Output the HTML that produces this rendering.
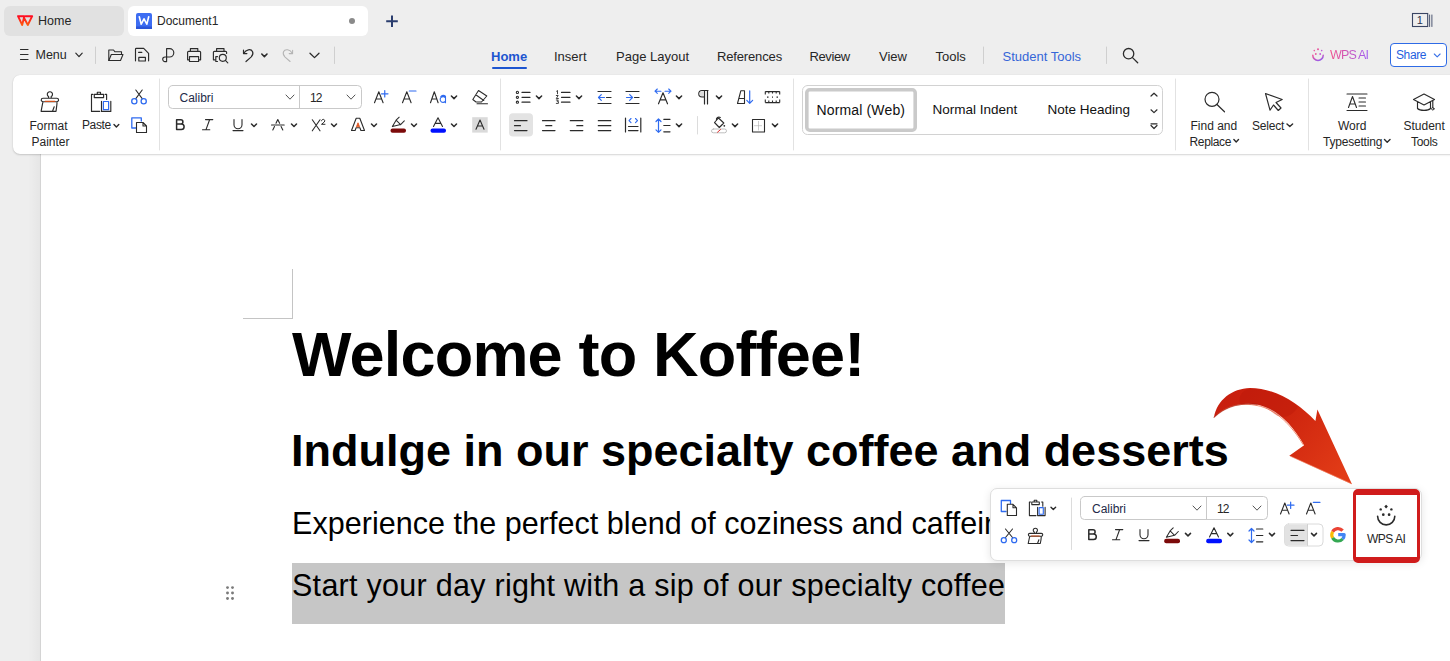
<!DOCTYPE html>
<html><head><meta charset="utf-8">
<style>
*{margin:0;padding:0;box-sizing:border-box}
html,body{width:1450px;height:661px;overflow:hidden;background:#eeeeee;font-family:"Liberation Sans",sans-serif;color:#262626}
.a{position:absolute}
.l{position:absolute;white-space:nowrap;line-height:1;font-size:12px;color:#262626}
.tb{position:absolute;white-space:nowrap;line-height:1;font-size:13px;color:#262626}
svg.ov{position:absolute;left:0;top:0;width:1450px;height:661px;overflow:visible}
#page{position:absolute;left:40px;top:150px;width:1410px;height:511px;background:#fff;border-left:1px solid #d4d4d4}
#shade{position:absolute;left:28px;top:150px;width:12px;height:511px;background:linear-gradient(90deg,rgba(0,0,0,0),rgba(0,0,0,.035))}
#ribbon{position:absolute;left:13px;top:75px;width:1460px;height:79px;background:#fff;border-radius:7px;box-shadow:0 1px 2px rgba(0,0,0,.16),0 0 1px rgba(0,0,0,.12)}
.h1{position:absolute;font-weight:bold;color:#000;white-space:nowrap;line-height:1}
.body{position:absolute;left:292px;color:#000;white-space:nowrap;line-height:1;font-size:30.5px;letter-spacing:0.28px}
.sty{position:absolute;white-space:nowrap;line-height:1;font-size:14px;color:#111}
#ftb{position:absolute;left:990px;top:488px;width:432px;height:73px;background:#fff;border:1px solid #dedede;border-radius:7px;box-shadow:0 2px 8px rgba(0,0,0,.10)}
</style></head><body>
<!-- ===== tab bar ===== -->
<div class="a" style="left:4px;top:6px;width:120px;height:30px;background:#e1e1e1;border-radius:6px"></div>
<div class="a" style="left:128px;top:6px;width:240px;height:30px;background:#fff;border-radius:6px"></div>
<div class="l" style="left:38px;top:15px;font-size:12.5px">Home</div>
<div class="l" style="left:157px;top:15px">Document1</div>

<!-- menu row -->
<div class="l" style="left:35.5px;top:49px;font-size:12.5px">Menu</div>

<!-- ribbon tabs -->
<div class="tb" style="left:491px;top:50px;font-weight:bold;color:#1d55d0">Home</div>
<div class="a" style="left:492px;top:66.5px;width:35px;height:2.5px;background:#1d55d0;border-radius:1px"></div>
<div class="tb" style="left:554px;top:50px">Insert</div>
<div class="tb" style="left:616px;top:50px">Page Layout</div>
<div class="tb" style="left:717px;top:50px;letter-spacing:-0.15px">References</div>
<div class="tb" style="left:809.5px;top:50px;letter-spacing:-0.4px">Review</div>
<div class="tb" style="left:879px;top:50px">View</div>
<div class="tb" style="left:935.5px;top:50px">Tools</div>
<div class="tb" style="left:1002.5px;top:50px;color:#3566d8">Student Tools</div>
<div class="l" style="left:1330px;top:49px;font-size:12.5px;letter-spacing:-0.8px;background:linear-gradient(90deg,#f2508c,#a05cf0);-webkit-background-clip:text;background-clip:text;color:transparent">WPS AI</div>
<div class="a" style="left:1390px;top:43px;width:57px;height:24px;border:1px solid #2e6be6;border-radius:4px;background:#fff"></div>
<div class="l" style="left:1396px;top:49px;color:#1f5fe0;letter-spacing:-0.4px">Share</div>

<!-- ===== page ===== -->
<div id="shade"></div>
<div id="page"></div>
<div id="ribbon"></div>

<!-- ribbon labels -->
<div class="l" style="left:29.5px;top:120px">Format</div>
<div class="l" style="left:31.5px;top:135.5px">Painter</div>
<div class="l" style="left:82px;top:119px;letter-spacing:-0.4px">Paste</div>
<div class="l" style="left:179.5px;top:92px;color:#232a48">Calibri</div>
<div class="l" style="left:310px;top:92px;letter-spacing:-1px">12</div>
<div class="sty" style="left:816.5px;top:103px;letter-spacing:0.15px">Normal (Web)</div>
<div class="sty" style="left:932.5px;top:103px;font-size:13.5px">Normal Indent</div>
<div class="sty" style="left:1047.5px;top:103px;font-size:13.5px">Note Heading</div>
<div class="l" style="left:1190.5px;top:120px">Find and</div>
<div class="l" style="left:1189.5px;top:135.5px;letter-spacing:-0.35px">Replace</div>
<div class="l" style="left:1252px;top:119.5px;letter-spacing:-0.2px">Select</div>
<div class="l" style="left:1338px;top:120px">Word</div>
<div class="l" style="left:1323px;top:135.5px;letter-spacing:-0.2px">Typesetting</div>
<div class="l" style="left:1403.5px;top:120px">Student</div>
<div class="l" style="left:1411px;top:135.5px;letter-spacing:-0.3px">Tools</div>

<!-- ===== document ===== -->
<div class="a" style="left:292px;top:269px;width:1px;height:50px;background:#c4c4c4"></div>
<div class="a" style="left:243px;top:318px;width:50px;height:1px;background:#c4c4c4"></div>
<div class="h1" style="left:292px;top:323px;font-size:63px;letter-spacing:-0.8px">Welcome to Koffee!</div>
<div class="h1" style="left:291px;top:428px;font-size:45px">Indulge in our specialty coffee and desserts</div>
<div class="a" style="left:292px;top:563px;width:713px;height:61px;background:#c6c6c6"></div>
<div class="body" style="top:508px;letter-spacing:0.05px">Experience the perfect blend of coziness and caffeine</div>
<div class="body" style="top:569.5px">Start your day right with a sip of our specialty coffee</div>

<!-- ===== floating toolbar ===== -->
<div id="ftb"></div>
<div class="l" style="left:1092px;top:503px;color:#232a48">Calibri</div>
<div class="l" style="left:1217px;top:503px;letter-spacing:-1px">12</div>
<div class="a" style="left:1353px;top:489px;width:67px;height:74px;border:solid #d01c1c;border-width:6px 3px 6px 3px;border-radius:5px;background:#fff"></div>
<div class="l" style="left:1367px;top:533px;letter-spacing:-0.5px;color:#262626">WPS AI</div>

<svg class="ov" viewBox="0 0 1450 661" fill="none" stroke="#2b2b2b" stroke-width="1.1" stroke-linecap="round" stroke-linejoin="round">
<!-- WPS logo -->
<defs><linearGradient id="wl" x1="0" y1="0" x2="0" y2="1"><stop offset="0" stop-color="#ff0a22"/><stop offset="1" stop-color="#ff5a0c"/></linearGradient></defs><path d="M18,16.2 H24.3 L22.2,25 Z M25.5,16.2 H32.2 L27.8,25 L24.5,18.8" stroke="url(#wl)" stroke-width="1.9"/>
<!-- doc icon -->
<rect x="136" y="13" width="16" height="16" rx="2" fill="#3d6df2" stroke="none"/>
<rect x="136" y="26.5" width="16" height="2.5" fill="#2c55d8" stroke="none"/>
<path d="M139.3,16.8 L141.2,24.2 L144,18.8 L146.8,24.2 L148.7,16.8" stroke="#fff" stroke-width="1.6"/>
<circle cx="352" cy="21" r="3" fill="#8a8a8a" stroke="none"/>
<path d="M392,15.5 V27 M386.2,21.2 H397.8" stroke="#2a3d6e" stroke-width="2" stroke-linecap="butt"/>
<!-- page count icon -->
<rect x="1412.5" y="13.5" width="15.2" height="13" stroke="#3a4563" stroke-width="1.1" stroke-linejoin="miter"/>
<path d="M1429.6,15 V26.5 M1431.9,15 V26.5" stroke="#3a4563" stroke-width="0.9"/>
<text x="1416.8" y="24.2" font-family="Liberation Sans" font-size="11" fill="#2a3553" stroke="none">1</text>
<!-- menu row -->
<path d="M20.5,49.5 H28 M20.5,54.5 H28 M20.5,59.5 H28" stroke-width="1.2"/>
<path d="M75.8,53.2 L79,56.6 L82.2,53.2" stroke-width="1.2"/>
<path d="M95.5,47 V63.5" stroke="#cfcfcf" stroke-width="1"/>
<path d="M108.8,60.5 V50 H113.5 L115,51.8 H121.5 V54" />
<path d="M108.8,60.5 L111.3,54.5 H123 L120.5,60.5 Z"/>
<path d="M135.5,60.8 V49.2 a0.8,0.8 0 0 1 0.8,-0.8 H143.7 L148.6,53.3 V60.8 M138.6,52.4 H141.8 M138.8,61 V57.3 H145.4 V61 Z" stroke-width="1.15"/>
<path d="M166.6,61.5 V48.6 H169.6 a4.2,4.2 0 0 1 0,8.4 H165 a2.3,2.3 0 0 0 0,4.6 H166.6" stroke-width="1.15"/>
<path d="M190.4,51.3 V48.6 H197.8 V51.3 M189.3,59.8 H187.6 V52.3 a1,1 0 0 1 1,-1 H199.6 a1,1 0 0 1 1,1 V59.8 H198.8 M189.5,56.6 H198.6 V61.5 H189.5 Z" stroke-width="1.15"/>
<path d="M216.6,51.3 V48.6 H224 V51.3 M214.8,59.8 H213.4 V52.3 a1,1 0 0 1 1,-1 H225.6 a1,1 0 0 1 1,1 V53.5 M217.5,56.6 H215.8 V61.5 H217.5" stroke-width="1.15"/>
<circle cx="222.8" cy="57.8" r="3.5" stroke-width="1.15"/><path d="M225.4,60.4 L227.8,62.8" stroke-width="1.15"/>
<path d="M243.5,50.2 V53.6 H246.9 M244,53 C245.8,49.6 251,48.3 252.6,51.8 C253.4,53.8 252.6,55.6 251,57.1 L246,61.5" stroke-width="1.2"/>
<path d="M261.8,54 L264.4,56.6 L267,54" stroke-width="1.6"/>
<path d="M292.6,50.2 V53.6 H289.2 M292.1,53 C290.3,49.6 285.1,48.3 283.5,51.8 C282.7,53.8 283.5,55.6 285.1,57.1 L290.1,61.5" stroke="#b4b4b4" stroke-width="1.05"/>
<path d="M310,53.2 L314.5,57.6 L319,53.2" stroke-width="1.3"/>
<path d="M334.5,47 V63.5" stroke="#cfcfcf" stroke-width="1"/>
<!-- tab separators/search -->
<path d="M983.5,47 V63.5 M1106.5,47 V63.5" stroke="#cfcfcf" stroke-width="1"/>
<circle cx="1128.6" cy="53.7" r="5.2" stroke-width="1.3"/><path d="M1132.5,57.6 L1137.7,62.8" stroke-width="1.3"/>
<!-- wps ai small -->
<defs><linearGradient id="g1" x1="0" y1="0" x2="1" y2="1"><stop offset="0" stop-color="#f0559a"/><stop offset="1" stop-color="#8a5cf5"/></linearGradient></defs>
<path d="M1312.8,55.2 a5.2,5.2 0 0 0 10.4,0" stroke="url(#g1)" stroke-width="1.5"/>
<circle cx="1315.8" cy="54" r="0.9" fill="#e8579f" stroke="none"/><circle cx="1320.2" cy="54" r="0.9" fill="#c35ad8" stroke="none"/>
<circle cx="1318" cy="49.2" r="1" fill="#e8579f" stroke="none"/><circle cx="1314.3" cy="50.6" r="0.8" fill="#e8579f" stroke="none"/><circle cx="1321.7" cy="50.6" r="0.8" fill="#c35ad8" stroke="none"/>
<path d="M1434.3,54 L1437.2,56.8 L1440.1,54" stroke="#3a72e8" stroke-width="1.1"/>
</svg>
<svg class="ov" viewBox="0 0 1450 661" fill="none" stroke="#2b2b2b" stroke-width="1.1" stroke-linecap="round" stroke-linejoin="round">
<!-- format painter -->
<path d="M48.6,97.9 V96.6 a2.6,2.6 0 1 1 2.6,0 V97.9 M43,98.2 H56.8 a1.75,1.75 0 0 1 0,3.5 H43 a1.75,1.75 0 0 1 0,-3.5 Z M42.9,101.8 L41.1,111.3 H56 C56.5,108 57,105 57.1,101.8 M52.6,111 L54.2,106.8" stroke-width="1.15"/>
<path d="M45.2,101.3 H54.8" stroke="#d0501c" stroke-width="1.2"/>
<!-- paste -->
<path d="M92.9,94.4 H91.5 V111.4 H99.7 M105.2,94.4 H106.6 V99.5 M94.3,94.4 H103.6 V97.6 H94.3 Z M97.3,94.4 V92.2 H100.5 V94.4 M101.5,101.2 V111.4 H110.8 V101.2" stroke-width="1.15"/>
<rect x="103.4" y="101.5" width="5.2" height="8.2" stroke="#2f6bf0" stroke-width="1.2"/>
<!-- cut -->
<path d="M135.8,98.6 L142.2,90 M142.2,98.6 L135.8,90" stroke="#2b2b2b"/>
<circle cx="134.3" cy="101.2" r="2.6" stroke="#2f6bf0" stroke-width="1.3"/><circle cx="143.7" cy="101.2" r="2.6" stroke="#2f6bf0" stroke-width="1.3"/>
<!-- copy -->
<path d="M136,128 H131.8 V117.8 H141.3 V121" stroke="#2f6bf0" stroke-width="1.3"/>
<path d="M136.5,122.5 H143 L146.5,126 V132.5 H136.5 Z M143,122.5 V126 H146.5"/>
<path d="M159.5,79 V150" stroke="#e2e2e2" stroke-width="1"/>
<!-- font combo -->
<rect x="168.5" y="85.5" width="193" height="23" rx="4" stroke="#c9c9c9" stroke-width="1"/>
<path d="M299.5,86 V108" stroke="#c9c9c9" stroke-width="1"/>
<path d="M286,95 L290,99.2 L294,95 M347,95 L351,99.2 L355,95" stroke="#555" stroke-width="1"/>
<!-- B I U -->
<path d="M176.6,119.8 V129.6 H181.3 a2.8,2.8 0 0 0 0,-5.6 H176.6 M176.6,119.8 H180.8 a2.1,2.1 0 0 1 0,4.2" stroke-width="1.5"/>
<path d="M205.5,119.6 H212.8 M202.5,129.8 H209.8 M209.6,119.8 L206,129.6" stroke-width="1.1"/>
<path d="M234,119.5 V124.8 a4,4 0 0 0 8,0 V119.5 M233,130.6 H243"/>
<path d="M251.5,124 L254,126.5 L256.5,124 M291.5,124 L294,126.5 L296.5,124 M331.5,124 L334,126.5 L336.5,124 M371.5,124 L374,126.5 L376.5,124 M411.5,124 L414,126.5 L416.5,124 M451.5,124 L454,126.5 L456.5,124" stroke-width="1.5"/>
<!-- strike A -->
<path d="M272.8,130 L274.5,126.5 M276,123.2 L277.8,119.5 L279.6,123.2 M281.1,126.5 L282.8,130 M271.5,125 H284.2" stroke-width="1.1"/>
<!-- X2 -->
<path d="M312.3,119.8 L320,130.8 M320,119.8 L312.3,130.8" stroke-width="1.1"/>
<path d="M321.5,120.8 a1.6,1.6 0 1 1 2.8,1.2 L321.5,124.3 H325" stroke-width="1"/>
<!-- text effect A -->
<path d="M351.5,130.5 L356.2,118.3 H359.8 L364.5,130.5 H360.9 L359.9,127.8 H356.1 L355.1,130.5 Z" stroke-width="1.1"/>
<path d="M356.6,126.4 L358,122.8 L359.4,126.4 Z" fill="#e0521c" stroke="#e0521c" stroke-width="0.9"/>
<!-- highlighter -->
<path d="M392.4,126.6 L396.1,120.2 L400.6,124.6 Z M396.1,120.2 L399.2,117.2 M400.6,124.6 L404.3,120.8" stroke-width="1.05"/>
<rect x="390.5" y="128.5" width="15.5" height="4.3" rx="2" fill="#7c0a0a" stroke="none"/>
<!-- font color -->
<path d="M433.5,126.5 L438,117.8 L442.5,126.5 M435.2,123.4 H440.8" stroke-width="1.1"/>
<rect x="430.5" y="128.5" width="15.5" height="4.3" rx="2" fill="#0010ff" stroke="none"/>
<!-- char shading -->
<rect x="472.2" y="117.2" width="15.5" height="15.4" fill="#dadada" stroke="none"/>
<path d="M476,129.2 L480,120 L484,129.2 M477.4,126 H482.6" stroke-width="1.1"/>
<!-- A+ A- Aa eraser -->
<path d="M374.5,102.8 L378.8,91.8 L383.1,102.8 M376.1,99 H381.5" stroke-width="1.1"/>
<path d="M381.5,93.8 H388 M384.75,90.5 V97" stroke="#2f6bf0" stroke-width="1.2"/>
<path d="M402.5,102.8 L406.8,91.8 L411.1,102.8 M404.1,99 H409.5" stroke-width="1.1"/>
<path d="M409.3,91 H416" stroke="#2f6bf0" stroke-width="1.2"/>
<path d="M430.5,102.8 L434.3,91.8 L438.1,102.8 M431.9,99 H436.7" stroke-width="1.1"/>
<path d="M445.5,96.2 V102.8 M445.2,97.5 a2.9,2.9 0 1 0 0,4 M440.8,96.5 a3,2.6 0 0 1 4.6,-0.3" stroke="#2f6bf0" stroke-width="1.1"/>
<path d="M478.5,90.5 L486.8,96 L481.5,102 L476,102 L472.8,99.5 Z M475.8,94.8 L483.8,100.5 M477,103.8 H487.5" stroke-width="1.05"/>
<path d="M500.5,79 V150" stroke="#e2e2e2" stroke-width="1"/>
</svg>
<svg class="ov" viewBox="0 0 1450 661" fill="none" stroke="#2b2b2b" stroke-width="1.1" stroke-linecap="round" stroke-linejoin="round">
<path d="M114,124.6 L116.4,127 L118.8,124.6" stroke-width="1.4"/>
<path d="M451.4,96 L454,98.6 L456.6,96" stroke-width="1.5"/>
<!-- bullets -->
<circle cx="517.4" cy="92.4" r="1.1"/><circle cx="517.4" cy="97.3" r="1.1"/><circle cx="517.4" cy="102.2" r="1.1"/>
<path d="M522,92.4 H530 M522,97.3 H530 M522,102.2 H530" stroke-width="1.2"/>
<path d="M536.4,96 L539,98.6 L541.6,96 M576.4,96 L579,98.6 L581.6,96 M676.4,96 L679,98.6 L681.6,96 M716.4,96 L719,98.6 L721.6,96" stroke-width="1.5"/>
<!-- numbering -->
<path d="M556.6,91.2 L557.5,90.5 V93.8 M556.3,95.5 H558.2 L556.3,98.5 H558.4 M556.3,100 H558.3 L557.2,101.4 H558.4 V103.4 H556.3" stroke-width="0.9"/>
<path d="M561.5,92.4 H570 M561.5,97.3 H570 M561.5,102.2 H570" stroke-width="1.2"/>
<!-- indents -->
<path d="M598,91.5 H611 M598,103.5 H611 M606.5,97.5 H611" stroke-width="1.2"/>
<path d="M598.5,97.5 H604.5 M601.3,94.7 L598.5,97.5 L601.3,100.3" stroke="#2f6bf0" stroke-width="1.2"/>
<path d="M626,91.5 H639 M626,103.5 H639 M634.5,97.5 H639" stroke-width="1.2"/>
<path d="M626.5,97.5 H632.5 M629.7,94.7 L632.5,97.5 L629.7,100.3" stroke="#2f6bf0" stroke-width="1.2"/>
<!-- char spacing -->
<path d="M658.5,103.8 L663,92.8 L667.5,103.8 M660.2,99.8 H665.8" stroke-width="1.15"/>
<path d="M655,91.2 H661 M657.3,89 L655,91.2 L657.3,93.4 M665,91.2 H671 M668.7,89 L671,91.2 L668.7,93.4" stroke="#2f6bf0" stroke-width="1.1"/>
<!-- pilcrow -->
<path d="M704.5,90.5 V104 M707.5,90.5 V104 M708,90.5 H702 a3.2,3.2 0 0 0 0,6.4 H704.5" stroke-width="1.2"/>
<path d="M702,91.3 a2.5,2.5 0 0 0 0,5 H704 V91.3 Z" fill="#dcdcdc" stroke="none"/>
<!-- sort -->
<path d="M737.5,103.5 L740.8,90.8 H744.5 V103.5 Z M739,98.5 H744.3" stroke-width="1.1"/>
<path d="M749.7,90.8 V103 M746.8,100.3 L749.7,103.3 L752.6,100.3" stroke="#2f6bf0" stroke-width="1.2"/>
<!-- grid dashed -->
<path d="M765.3,91.6 H779.7 M765.3,102.6 H779.7 M765.3,91.6 V94.6 M779.7,91.6 V94.6 M765.3,99.6 V102.6 M779.7,99.6 V102.6 M768.8,91.6 V93.6 M772.5,91.6 V93.6 M776.2,91.6 V93.6 M768.8,102.6 V100.6 M772.5,102.6 V100.6 M776.2,102.6 V100.6" stroke-width="1.1" stroke-linecap="butt"/>
<path d="M767,97.1 h1.5 M772,97.1 h1 M776.5,97.1 h1.5" stroke-width="1.1" stroke-linecap="butt"/>
<!-- align buttons -->
<rect x="509" y="113.2" width="24" height="23.4" rx="4" fill="#e3e3e3" stroke="none"/>
<path d="M514.5,120.7 H527 M514.5,125.7 H520.5 M514.5,130.6 H527" stroke-width="1.2"/>
<path d="M542.5,120.7 H555 M545.8,125.7 H551.8 M542.5,130.6 H555" stroke-width="1.2"/>
<path d="M570.3,120.7 H582.8 M576.8,125.7 H582.8 M570.3,130.6 H582.8" stroke-width="1.2"/>
<path d="M598.3,120.7 H610.8 M598.3,125.7 H610.8 M598.3,130.6 H610.8" stroke-width="1.2"/>
<path d="M625.5,118 V132 M640.8,118 V132 M628.5,126.5 H638 M628.5,130.6 H638" stroke-width="1.2"/>
<path d="M631,118.5 L629,120.6 L631,122.7 M635.5,118.5 L637.5,120.6 L635.5,122.7" stroke="#2f6bf0" stroke-width="1.1"/>
<!-- line spacing -->
<path d="M658.5,119 V132.3 M656,121.5 L658.5,119 L661,121.5 M656,129.8 L658.5,132.3 L661,129.8" stroke="#2f6bf0" stroke-width="1.2"/>
<path d="M663.8,119.3 H670 M663.8,125.5 H670 M663.8,131.8 H670" stroke-width="1.2"/>
<path d="M676.4,124 L679,126.6 L681.6,124 M732.4,124 L735,126.6 L737.6,124 M772.4,124 L775,126.6 L777.6,124" stroke-width="1.5"/>
<path d="M697.5,116.5 V134" stroke="#dcdcdc" stroke-width="1"/>
<!-- shading -->
<path d="M714.5,122.5 L718.5,118 L723.8,123 L719.3,127.5 Z M716.5,120.3 a2.5,2.5 0 0 1 3.8,-2.8" stroke-width="1.1"/>
<circle cx="724.3" cy="125.8" r="0.9" fill="#2b2b2b" stroke="none"/>
<rect x="711.5" y="129" width="15" height="3.8" rx="1.9" stroke="#b8b8b8" stroke-width="0.9"/>
<path d="M717.5,132.2 L720.5,129.6" stroke="#e03030" stroke-width="1"/>
<!-- borders -->
<rect x="752.5" y="119.5" width="12" height="12.5" stroke-width="1.1"/>
<path d="M758.5,121.5 V130 M754.5,125.7 H762.5" stroke="#b0b0b0" stroke-width="0.7" stroke-dasharray="1,1"/>
<path d="M793.5,79 V150" stroke="#e2e2e2" stroke-width="1"/>
<!-- styles gallery -->
<rect x="802.5" y="85.5" width="360" height="49" rx="5" stroke="#d2d2d2" stroke-width="1"/>
<rect x="806.8" y="89.8" width="108.4" height="40.4" rx="3" stroke="#cacaca" stroke-width="3.6"/>
<path d="M1151,96 L1154,93.2 L1157,96 M1151,109.8 L1154,112.6 L1157,109.8 M1151,123.8 H1157 M1151,125.5 L1154,128.5 L1157,125.5" stroke-width="1.2"/>
<path d="M1175.5,79 V150 M1308.5,79 V150" stroke="#e2e2e2" stroke-width="1"/>
<!-- find -->
<circle cx="1212" cy="99.3" r="7" stroke-width="1.2"/><path d="M1217,104.5 L1224.5,111.8" stroke-width="1.2"/>
<path d="M1233.9,139.6 L1236.2,141.9 L1238.5,139.6 M1287,124 L1289.8,126.6 L1292.6,124 M1384.5,139.6 L1387.2,142.2 L1390,139.6" stroke-width="1.4"/>
<!-- select cursor -->
<path d="M1265.5,93.5 L1282.2,99.5 L1276,102.5 L1281,108 L1278.3,110.5 L1273.5,105 L1270,110.2 Z" stroke-width="1.15"/>
<!-- word typesetting -->
<path d="M1347,94 H1367 M1347,110.5 H1367" stroke-width="1.1"/>
<path d="M1348.5,107.5 L1352.5,96.5 L1356.5,107.5 M1349.8,104 H1355.2 M1359,98 H1365.5 M1359,102 H1365.5 M1359,106 H1365.5" stroke-width="1.1"/>
<!-- student tools -->
<path d="M1413.5,99.5 L1424,94 L1434.5,99.5 L1424,105 Z M1417.5,101.8 V108.5 C1420,111 1428,111 1430.5,108.5 V101.8 M1432.8,100.5 V107.5" stroke-width="1.15"/>
<circle cx="1432.8" cy="108.8" r="1.2" stroke-width="1"/>
</svg>
<svg class="ov" viewBox="0 0 1450 661" fill="none" stroke="#2b2b2b" stroke-width="1.1" stroke-linecap="round" stroke-linejoin="round">
<!-- drag handle -->
<g fill="#7a7a7a" stroke="none"><circle cx="227.5" cy="587.6" r="1.45"/><circle cx="232.5" cy="587.6" r="1.45"/><circle cx="227.5" cy="593" r="1.45"/><circle cx="232.5" cy="593" r="1.45"/><circle cx="227.5" cy="598.5" r="1.45"/><circle cx="232.5" cy="598.5" r="1.45"/></g>
<!-- text cursor -->

<!-- floating: copy -->
<path d="M1006,511.5 H1001.3 V500.5 H1010.5 V503.5" stroke="#2f6bf0" stroke-width="1.3"/>
<path d="M1007.3,504.3 H1013 L1016.5,507.8 V515.5 H1007.3 Z M1013,504.3 V507.8 H1016.5"/>
<!-- floating: paste -->
<path d="M1030.6,502 H1029.4 V515.6 H1036 M1041.6,502 H1042.8 V506.2 M1031.8,502 H1039.3 V504.6 H1031.8 Z M1034.2,502 V500.3 H1036.8 V502 M1037.6,507.4 V515.6 H1045.1 V507.4" stroke-width="1.1"/>
<rect x="1039.1" y="507.6" width="4.2" height="6.6" stroke="#2f6bf0" stroke-width="1.15"/>
<path d="M1051,507.2 L1053.3,509.5 L1055.6,507.2" stroke-width="1.4"/>
<!-- floating: cut -->
<path d="M1005.5,537.5 L1012.5,529 M1012.5,537.5 L1005.5,529"/>
<circle cx="1003.8" cy="540.2" r="2.5" stroke="#2f6bf0" stroke-width="1.3"/><circle cx="1014.2" cy="540.2" r="2.5" stroke="#2f6bf0" stroke-width="1.3"/>
<!-- floating: painter -->
<path d="M1034.3,533.2 V532.1 a2.1,2.1 0 1 1 2.1,0 V533.2 M1029.8,533.4 H1041.3 a1.45,1.45 0 0 1 0,2.9 H1029.8 a1.45,1.45 0 0 1 0,-2.9 Z M1029.7,536.4 L1028.2,543.5 H1040.3 C1040.8,541 1041.2,538.8 1041.3,536.4 M1037.6,543.3 L1038.9,539.8" stroke-width="1.1"/>
<path d="M1031.5,536 H1039.3" stroke="#d0501c" stroke-width="1.15"/>
<path d="M1071.5,498 V549.5" stroke="#dcdcdc" stroke-width="1"/>
<!-- floating combo -->
<rect x="1080.5" y="496.5" width="187" height="23" rx="4" stroke="#c9c9c9" stroke-width="1"/>
<path d="M1206.5,497 V519" stroke="#c9c9c9" stroke-width="1"/>
<path d="M1193,506 L1197,510.2 L1201,506 M1253,506 L1257,510.2 L1261,506" stroke="#555" stroke-width="1"/>
<!-- A+ A- -->
<path d="M1280.5,514 L1284.8,503 L1289.1,514 M1282.1,510.2 H1287.5" stroke-width="1.1"/>
<path d="M1287.3,505.2 H1294 M1290.65,502 V508.5" stroke="#2f6bf0" stroke-width="1.2"/>
<path d="M1306.5,514 L1310.8,503 L1315.1,514 M1308.1,510.2 H1313.5" stroke-width="1.1"/>
<path d="M1313.3,502.3 H1320" stroke="#2f6bf0" stroke-width="1.2"/>
<!-- B I U -->
<path d="M1088.8,529.8 V539.6 H1093.5 a2.8,2.8 0 0 0 0,-5.6 H1088.8 M1088.8,529.8 H1093 a2.1,2.1 0 0 1 0,4.2" stroke-width="1.5"/>
<path d="M1115.5,529.6 H1122.8 M1112.5,539.8 H1119.8 M1119.6,529.8 L1116,539.6"/>
<path d="M1140,529.5 V534.8 a4,4 0 0 0 8,0 V529.5 M1139,540.6 H1149"/>
<!-- highlighter -->
<path d="M1166.4,537.3 L1170.1,530.9 L1174.6,535.3 Z M1170.1,530.9 L1173.2,527.9 M1174.6,535.3 L1178.3,531.5" stroke-width="1.05"/>
<rect x="1164.2" y="538.8" width="15.8" height="4.5" rx="2" fill="#7c0a0a" stroke="none"/>
<path d="M1185.5,533.4 L1188,535.9 L1190.5,533.4 M1227.8,533.4 L1230.3,535.9 L1232.8,533.4 M1269.5,533.4 L1272,535.9 L1274.5,533.4" stroke-width="1.5"/>
<!-- font color -->
<path d="M1209.5,537 L1214,527.8 L1218.5,537 M1211.2,533.6 H1216.8"/>
<rect x="1206.2" y="538.8" width="15.8" height="4.5" rx="2" fill="#0010ff" stroke="none"/>
<!-- line spacing -->
<path d="M1251.5,528.5 V542.5 M1249,531 L1251.5,528.5 L1254,531 M1249,540 L1251.5,542.5 L1254,540" stroke="#2f6bf0" stroke-width="1.2"/>
<path d="M1256.5,529 H1262.8 M1256.5,535.5 H1262.8 M1256.5,541.8 H1262.8" stroke-width="1.2"/>
<!-- align split -->
<rect x="1284.5" y="524" width="38.5" height="22" rx="4" fill="#fff" stroke="#dadada" stroke-width="1"/>
<path d="M1288.5,524.5 H1307.5 V545.5 H1288.5 a4,4 0 0 1 -4,-4 V528.5 a4,4 0 0 1 4,-4 Z" fill="#e2e2e2" stroke="none"/>
<path d="M1307.5,524.5 V545.5" stroke="#d0d0d0" stroke-width="1"/>
<path d="M1291,530.3 H1304 M1291,535.5 H1297.5 M1291,540.6 H1304" stroke-width="1.2"/>
<path d="M1311.5,533.4 L1314,535.9 L1316.5,533.4" stroke-width="1.5"/>
<!-- google G -->
<g stroke-width="3.2" stroke-linecap="butt">
<path d="M1342.61,530.65 A6.2,6.2 0 0 0 1332.63,531.70" stroke="#ea4335"/>
<path d="M1332.63,531.70 A6.2,6.2 0 0 0 1332.63,537.90" stroke="#fbbc05"/>
<path d="M1332.63,537.90 A6.2,6.2 0 0 0 1342.61,538.95" stroke="#34a853"/>
<path d="M1342.61,538.95 A6.2,6.2 0 0 0 1344.20,534.80 V534.70 H1338.2" stroke="#4285f4"/>
</g>
<!-- WPS AI icon in red box -->
<path d="M1377.6,516.3 a8.4,8.4 0 0 0 17.2,0" stroke-width="1.6"/>
<circle cx="1383.3" cy="514.7" r="1.35" fill="#2b2b2b" stroke="none"/><circle cx="1389.1" cy="514.7" r="1.35" fill="#2b2b2b" stroke="none"/>
<path d="M1386.1,504.8 l1.8,1.8 -1.8,1.8 -1.8,-1.8 Z" fill="#2b2b2b" stroke="none"/>
<circle cx="1380.7" cy="509.4" r="1.2" fill="#2b2b2b" stroke="none"/><circle cx="1391.4" cy="509.4" r="1.2" fill="#2b2b2b" stroke="none"/>
<!-- red arrow -->
<defs>
<linearGradient id="ar" x1="1230" y1="390" x2="1340" y2="480" gradientUnits="userSpaceOnUse"><stop offset="0" stop-color="#c81e0e"/><stop offset="0.45" stop-color="#cf260f"/><stop offset="1" stop-color="#e23c17"/></linearGradient>
</defs>
<path d="M1214,417.4 C1217,400 1232,388.5 1250,388 C1275,388 1298,403 1315.4,420.9 L1317.4,409.6 L1352,484.3 L1289.3,455.7 L1304.1,445.2 C1292,424 1276,408 1257,404.5 C1242,402 1226,406 1214,417.4 Z" fill="url(#ar)" stroke="none"/>
<path d="M1250,388.5 C1268,389 1284,396 1298,406.5 C1292,418 1280,420 1272,412 C1262,404 1250,402 1240,403 C1238,396 1243,390 1250,388.5 Z" fill="#b8170a" opacity="0.35" stroke="none"/>
<path d="M1217,414.5 C1228,405 1242,402.5 1257,405.5 C1276,409 1292,426 1303,444.5" stroke="#f06a45" stroke-width="1" opacity="0.75"/>
<path d="M1291,456.5 L1351,483.5" stroke="#f58a6a" stroke-width="1" opacity="0.6"/>
<path d="M1214,417.4 C1226,406 1242,402 1257,404.5" stroke="#a01408" stroke-width="1.3" opacity="0.5"/>
</svg>
</body></html>
